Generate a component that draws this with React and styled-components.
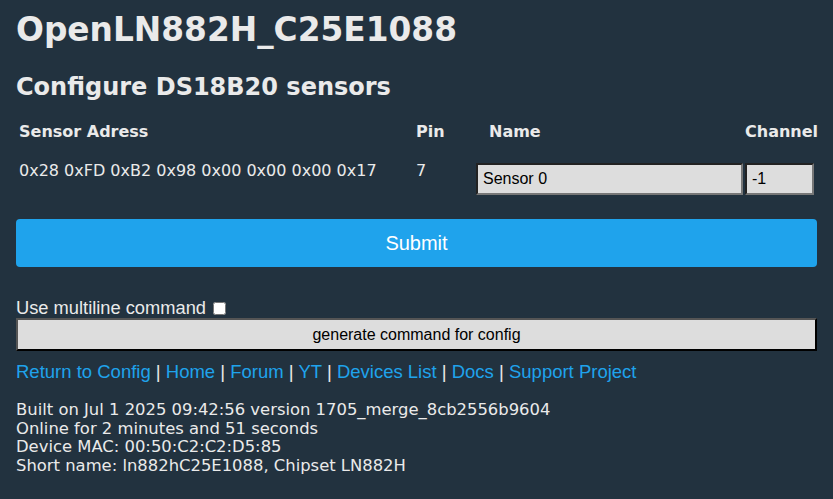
import React, { useState } from 'react';
import styled, { createGlobalStyle } from 'styled-components';

const GlobalStyle = createGlobalStyle`
  html, body {
    margin: 0;
    background: #22323f;
  }
  body {
    font-family: "DejaVu Sans", Verdana, sans-serif;
    font-size: 16px;
    color: #eaeaea;
  }
`;

const Page = styled.div`
  padding: 8px 16px 16px;
`;

const Title = styled.h1`
  margin: 0;
  font-size: 32.8px;
  font-weight: bold;
  line-height: 44px;
`;

const Subtitle = styled.h2`
  margin: 20px 0 0;
  font-size: 24px;
  font-weight: bold;
  line-height: 30px;
`;

const SensorTable = styled.div`
  display: grid;
  grid-template-columns: 397px 60px 269px 73px;
  margin: 20px 0 0 3px;
  align-items: start;
`;

const HeadCell = styled.div`
  font-weight: bold;
  font-size: 16px;
  line-height: 20px;
  padding-left: ${p => p.$indent || 0}px;
`;

const Cell = styled.div`
  font-size: 16px;
  line-height: 20px;
  margin-top: 19px;
`;

const InputCell = styled.div`
  margin-top: 21px;
`;

const TextInput = styled.input`
  box-sizing: border-box;
  width: ${p => p.$width}px;
  height: 32px;
  margin: 0;
  padding: 0 5px;
  background: #dddddd;
  color: #000;
  border: 2px solid;
  border-color: #222 #777 #777 #222;
  font-family: "Liberation Sans", Arial, sans-serif;
  font-size: 16px;
  outline: none;
`;

const SubmitButton = styled.button`
  display: block;
  width: 100%;
  height: 48px;
  margin-top: 24px;
  border: 0;
  border-radius: 4px;
  background: #1fa3ec;
  color: #fff;
  font-family: "Liberation Sans", Arial, sans-serif;
  font-size: 20px;
  cursor: pointer;
`;

const CheckRow = styled.label`
  display: flex;
  align-items: center;
  gap: 7px;
  margin-top: 31px;
  font-family: "Liberation Sans", Arial, sans-serif;
  font-size: 18.3px;
  line-height: 20px;
`;

const Check = styled.input`
  margin: 0;
  width: 13px;
  height: 13px;
`;

const GenerateButton = styled.button`
  display: block;
  width: 100%;
  height: 33px;
  margin-top: 0;
  background: #dddddd;
  color: #000;
  border: 2px solid;
  border-color: #555 #000 #000 #555;
  font-family: "Liberation Sans", Arial, sans-serif;
  font-size: 16px;
  cursor: pointer;
`;

const LinkRow = styled.div`
  margin-top: 10px;
  font-family: "Liberation Sans", Arial, sans-serif;
  font-size: 18.5px;
  line-height: 22px;
  color: #eaeaea;
`;

const Link = styled.a`
  color: #1fa3ec;
  text-decoration: none;
`;

const Footer = styled.div`
  margin-top: 18px;
  font-size: 16.4px;
  line-height: 18.7px;
`;

const links = ['Return to Config', 'Home', 'Forum', 'YT', 'Devices List', 'Docs', 'Support Project'];

const App = () => {
  const [name, setName] = useState('Sensor 0');
  const [channel, setChannel] = useState('-1');
  const [multiline, setMultiline] = useState(false);

  return (
    <Page>
      <GlobalStyle />
      <Title>OpenLN882H_C25E1088</Title>
      <Subtitle>Configure DS18B20 sensors</Subtitle>

      <SensorTable>
        <HeadCell>Sensor Adress</HeadCell>
        <HeadCell>Pin</HeadCell>
        <HeadCell $indent={13}>Name</HeadCell>
        <HeadCell>Channel</HeadCell>

        <Cell>0x28 0xFD 0xB2 0x98 0x00 0x00 0x00 0x17</Cell>
        <Cell>7</Cell>
        <InputCell>
          <TextInput $width={267} value={name} onChange={e => setName(e.target.value)} />
        </InputCell>
        <InputCell>
          <TextInput $width={69} value={channel} onChange={e => setChannel(e.target.value)} />
        </InputCell>
      </SensorTable>

      <SubmitButton>Submit</SubmitButton>

      <CheckRow>
        Use multiline command
        <Check type="checkbox" checked={multiline} onChange={e => setMultiline(e.target.checked)} />
      </CheckRow>
      <GenerateButton>generate command for config</GenerateButton>

      <LinkRow>
        {links.map((item, index) => (
          <React.Fragment key={`link-${index}`}>
            {index > 0 && ' | '}
            <Link href="#">{item}</Link>
          </React.Fragment>
        ))}
      </LinkRow>

      <Footer>
        Built on Jul 1 2025 09:42:56 version 1705_merge_8cb2556b9604<br />
        Online for 2 minutes and 51 seconds<br />
        Device MAC: 00:50:C2:C2:D5:85<br />
        Short name: ln882hC25E1088, Chipset LN882H
      </Footer>
    </Page>
  );
};

export default App;
